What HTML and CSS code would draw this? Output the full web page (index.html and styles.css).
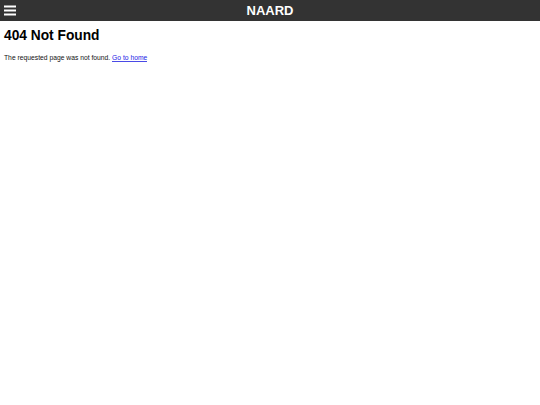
FILE: index.html
```html
<!DOCTYPE html>
<html lang="en">
<head>
<meta charset="utf-8">
<title>404 Not Found</title>
<link rel="stylesheet" href="styles.css">
</head>
<body>
<header class="topbar">
  <button class="menu-btn" aria-label="Menu">
    <svg width="12" height="11" viewBox="0 0 12 11"><rect x="0" y="0.5" width="12" height="2" fill="#fff"/><rect x="0" y="4.5" width="12" height="2" fill="#fff"/><rect x="0" y="8.5" width="12" height="2" fill="#fff"/></svg>
  </button>
  <div class="brand">NAARD</div>
  <div class="spacer"></div>
</header>
<main class="content">
  <h1 class="title">404 Not Found</h1>
  <p class="message">The requested page was not found. <a href="#" class="home-link">Go to home</a></p>
</main>
</body>
</html>
```

FILE: styles.css
```css
html, body {
  margin: 0;
  padding: 0;
  background: #fff;
  font-family: "Liberation Sans", Arial, sans-serif;
}

.topbar {
  height: 21px;
  background: #333333;
  display: grid;
  grid-template-columns: 1fr auto 1fr;
  align-items: center;
}

.menu-btn {
  justify-self: start;
  margin-left: 4px;
  padding: 0;
  border: 0;
  background: transparent;
  display: flex;
  width: 12px;
  height: 11px;
}

.brand {
  color: #fff;
  font-weight: bold;
  font-size: 13px;
  line-height: 17px;
  padding-bottom: 1px;
}

.content {
  padding: 0 4px;
}

.title {
  font-size: 13.75px;
  font-weight: bold;
  margin: 7px 0 0;
  color: #000;
}

.message {
  font-size: 6.75px;
  margin: 11px 0 0;
  color: #111;
}

.home-link {
  display: inline-block;
  line-height: 7px;
  color: #1a1ae6;
  text-decoration: none;
  border-bottom: 1px solid #4a4ae6;
}
```
